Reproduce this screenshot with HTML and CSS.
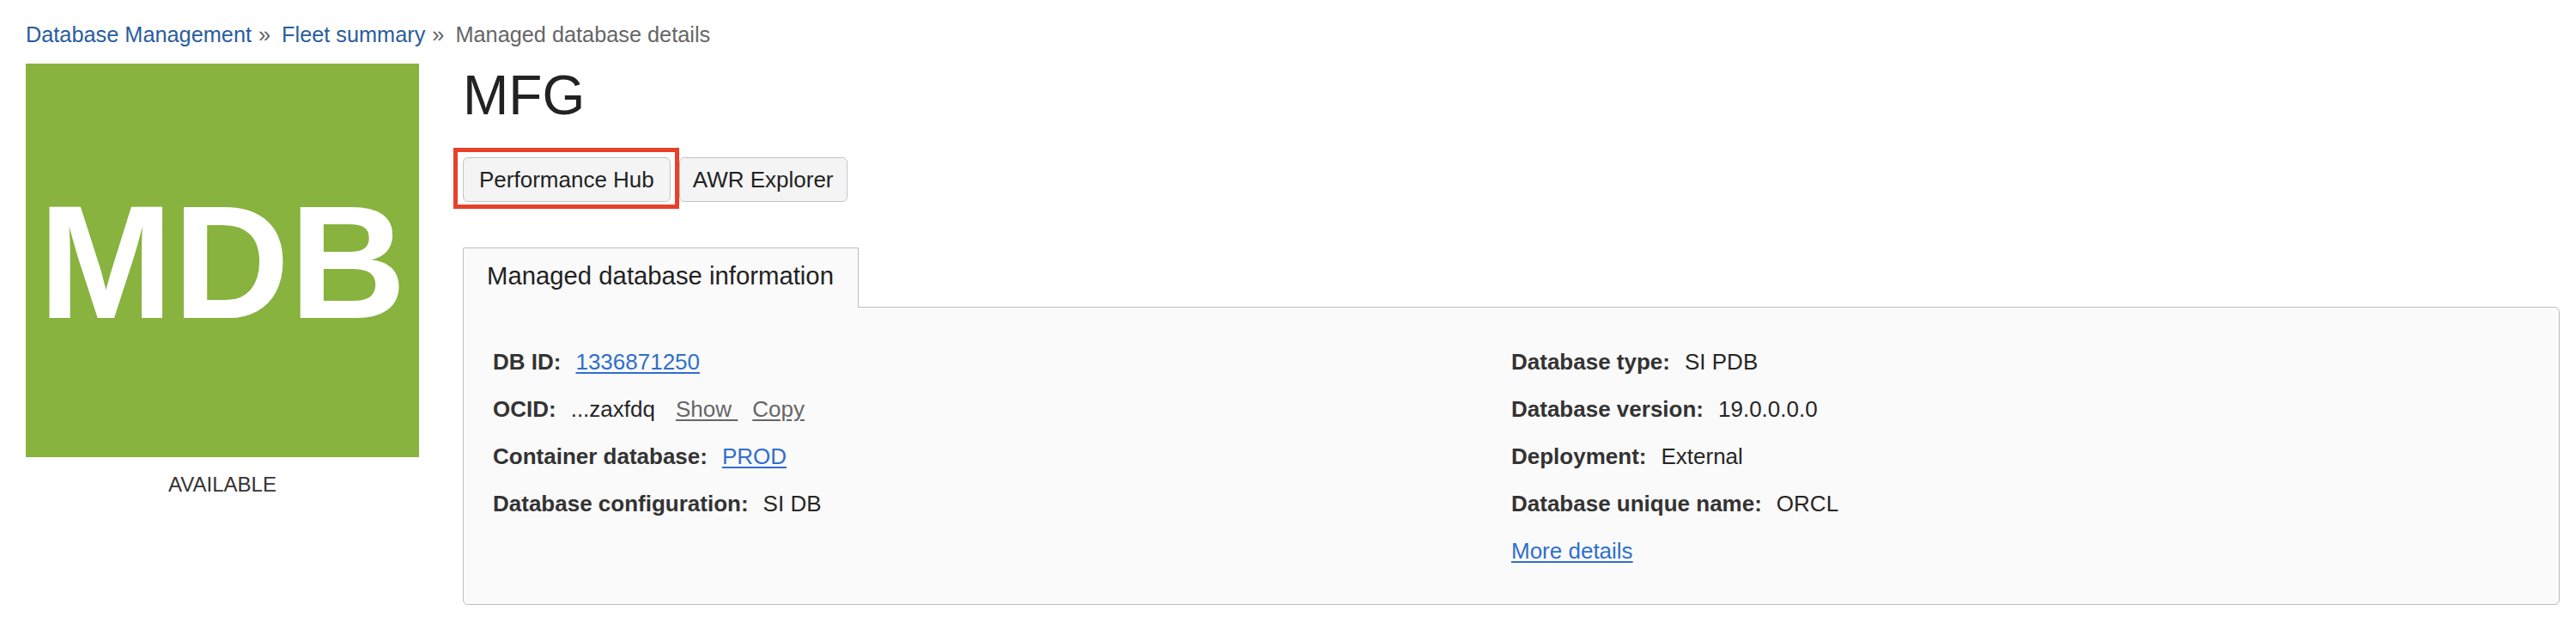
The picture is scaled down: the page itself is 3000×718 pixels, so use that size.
FILE: index.html
```html
<!DOCTYPE html>
<html lang="en">
<head>
<meta charset="utf-8">
<title>Managed database details</title>
<link rel="stylesheet" href="styles.css">
</head>
<body>
<div class="page">
  <nav class="crumbs">
    <a class="crumb-link" href="#">Database Management</a><span class="sep">»</span><a class="crumb-link" href="#">Fleet summary</a><span class="sep">»</span><span class="crumb-current">Managed database details</span>
  </nav>
  <div class="main">
    <div class="side">
      <div class="tile">MDB</div>
      <div class="status">AVAILABLE</div>
    </div>
    <div class="content">
      <h1 class="title">MFG</h1>
      <div class="actions">
        <span class="highlight-wrap"><button class="btn" type="button">Performance Hub</button><span class="highlight"></span></span>
        <button class="btn btn-narrow" type="button">AWR Explorer</button>
      </div>
      <div class="tabs">
        <div class="tab">Managed database information</div>
      </div>
      <div class="panel">
        <div class="col">
          <div class="row"><span class="k">DB ID:</span><a class="link" href="#">1336871250</a></div>
          <div class="row"><span class="k">OCID:</span><span class="v">...zaxfdq</span><a class="act act-first" href="#">Show&nbsp;</a><a class="act" href="#">Copy</a></div>
          <div class="row"><span class="k">Container database:</span><a class="link" href="#">PROD</a></div>
          <div class="row"><span class="k">Database configuration:</span><span class="v">SI DB</span></div>
        </div>
        <div class="col">
          <div class="row"><span class="k">Database type:</span><span class="v">SI PDB</span></div>
          <div class="row"><span class="k">Database version:</span><span class="v">19.0.0.0.0</span></div>
          <div class="row"><span class="k">Deployment:</span><span class="v">External</span></div>
          <div class="row"><span class="k">Database unique name:</span><span class="v">ORCL</span></div>
          <div class="row"><a class="link" href="#">More details</a></div>
        </div>
      </div>
    </div>
  </div>
</div>
</body>
</html>
```

FILE: styles.css
```css
* { box-sizing: border-box; }

html, body {
  margin: 0;
  padding: 0;
  background: #ffffff;
}

body {
  font-family: "Liberation Sans", Arial, Helvetica, sans-serif;
  color: #262626;
}

.page {
  padding: 25px 19px 0 30px;
}

/* breadcrumb */
.crumbs {
  font-size: 25.3px;
  line-height: 30px;
  height: 30px;
  white-space: nowrap;
}

.crumb-link {
  color: #2a5d9c;
  text-decoration: none;
}

.sep {
  color: #666666;
  margin: 0 13px 0 8px;
}

.crumb-current {
  color: #666666;
}

/* main layout */
.main {
  display: flex;
  gap: 51px;
  margin-top: 19px;
}

.side {
  width: 458px;
  flex: 0 0 458px;
  display: flex;
  flex-direction: column;
  align-items: center;
}

.tile {
  width: 458px;
  height: 458px;
  background: #87b33e;
  color: #ffffff;
  font-weight: bold;
  font-size: 188px;
  line-height: 1;
  display: flex;
  align-items: center;
  justify-content: center;
  padding-top: 4px;
}

.status {
  margin-top: 17px;
  font-size: 24px;
  line-height: 30px;
  color: #333333;
}

.content {
  flex: 1 1 auto;
  min-width: 0;
}

.title {
  margin: 0;
  font-size: 64px;
  line-height: 74px;
  font-weight: normal;
  color: #222222;
}

/* buttons */
.actions {
  margin-top: 35px;
  display: flex;
  gap: 10px;
}

.highlight-wrap {
  position: relative;
  display: inline-flex;
}

.btn {
  font-family: "Liberation Sans", Arial, Helvetica, sans-serif;
  font-size: 26px;
  line-height: 30px;
  padding: 10px 18px;
  color: #222222;
  background: #f4f4f4;
  border: 1px solid #c3c4c7;
  border-radius: 6px;
  margin: 0;
}

.btn-narrow {
  padding: 10px 15px;
}

.highlight {
  position: absolute;
  left: -11px;
  right: -10px;
  top: -11px;
  bottom: -8px;
  border: 5px solid #e5412b;
  pointer-events: none;
}

/* tabs */
.tabs {
  margin-top: 53px;
  display: flex;
}

.tab {
  position: relative;
  z-index: 1;
  margin-bottom: -1px;
  padding: 15px 28px 20px 27px;
  font-size: 29.3px;
  line-height: 34px;
  color: #222222;
  background: #fafafa;
  border: 1px solid #babec3;
  border-bottom: none;
  border-radius: 2px 2px 0 0;
}

.panel {
  position: relative;
  background: #fafafa;
  border: 1px solid #babec3;
  border-radius: 0 6px 6px 6px;
  padding: 48px 34px 47px 34px;
  display: grid;
  grid-template-columns: 1fr 1fr;
  align-items: start;
}

.col {
  display: flex;
  flex-direction: column;
  gap: 25px;
}

.row {
  font-size: 26px;
  line-height: 30px;
  white-space: nowrap;
  color: #262626;
}

.k {
  font-weight: bold;
  color: #333333;
  margin-right: 17px;
}

.v {
  color: #262626;
}

.link {
  color: #2f6fcd;
  text-decoration: underline;
  text-underline-offset: 3px;
}

.act {
  color: #666666;
  text-decoration: underline;
  text-underline-offset: 3px;
  margin-left: 17px;
}

.act-first {
  margin-left: 24px;
}
```
